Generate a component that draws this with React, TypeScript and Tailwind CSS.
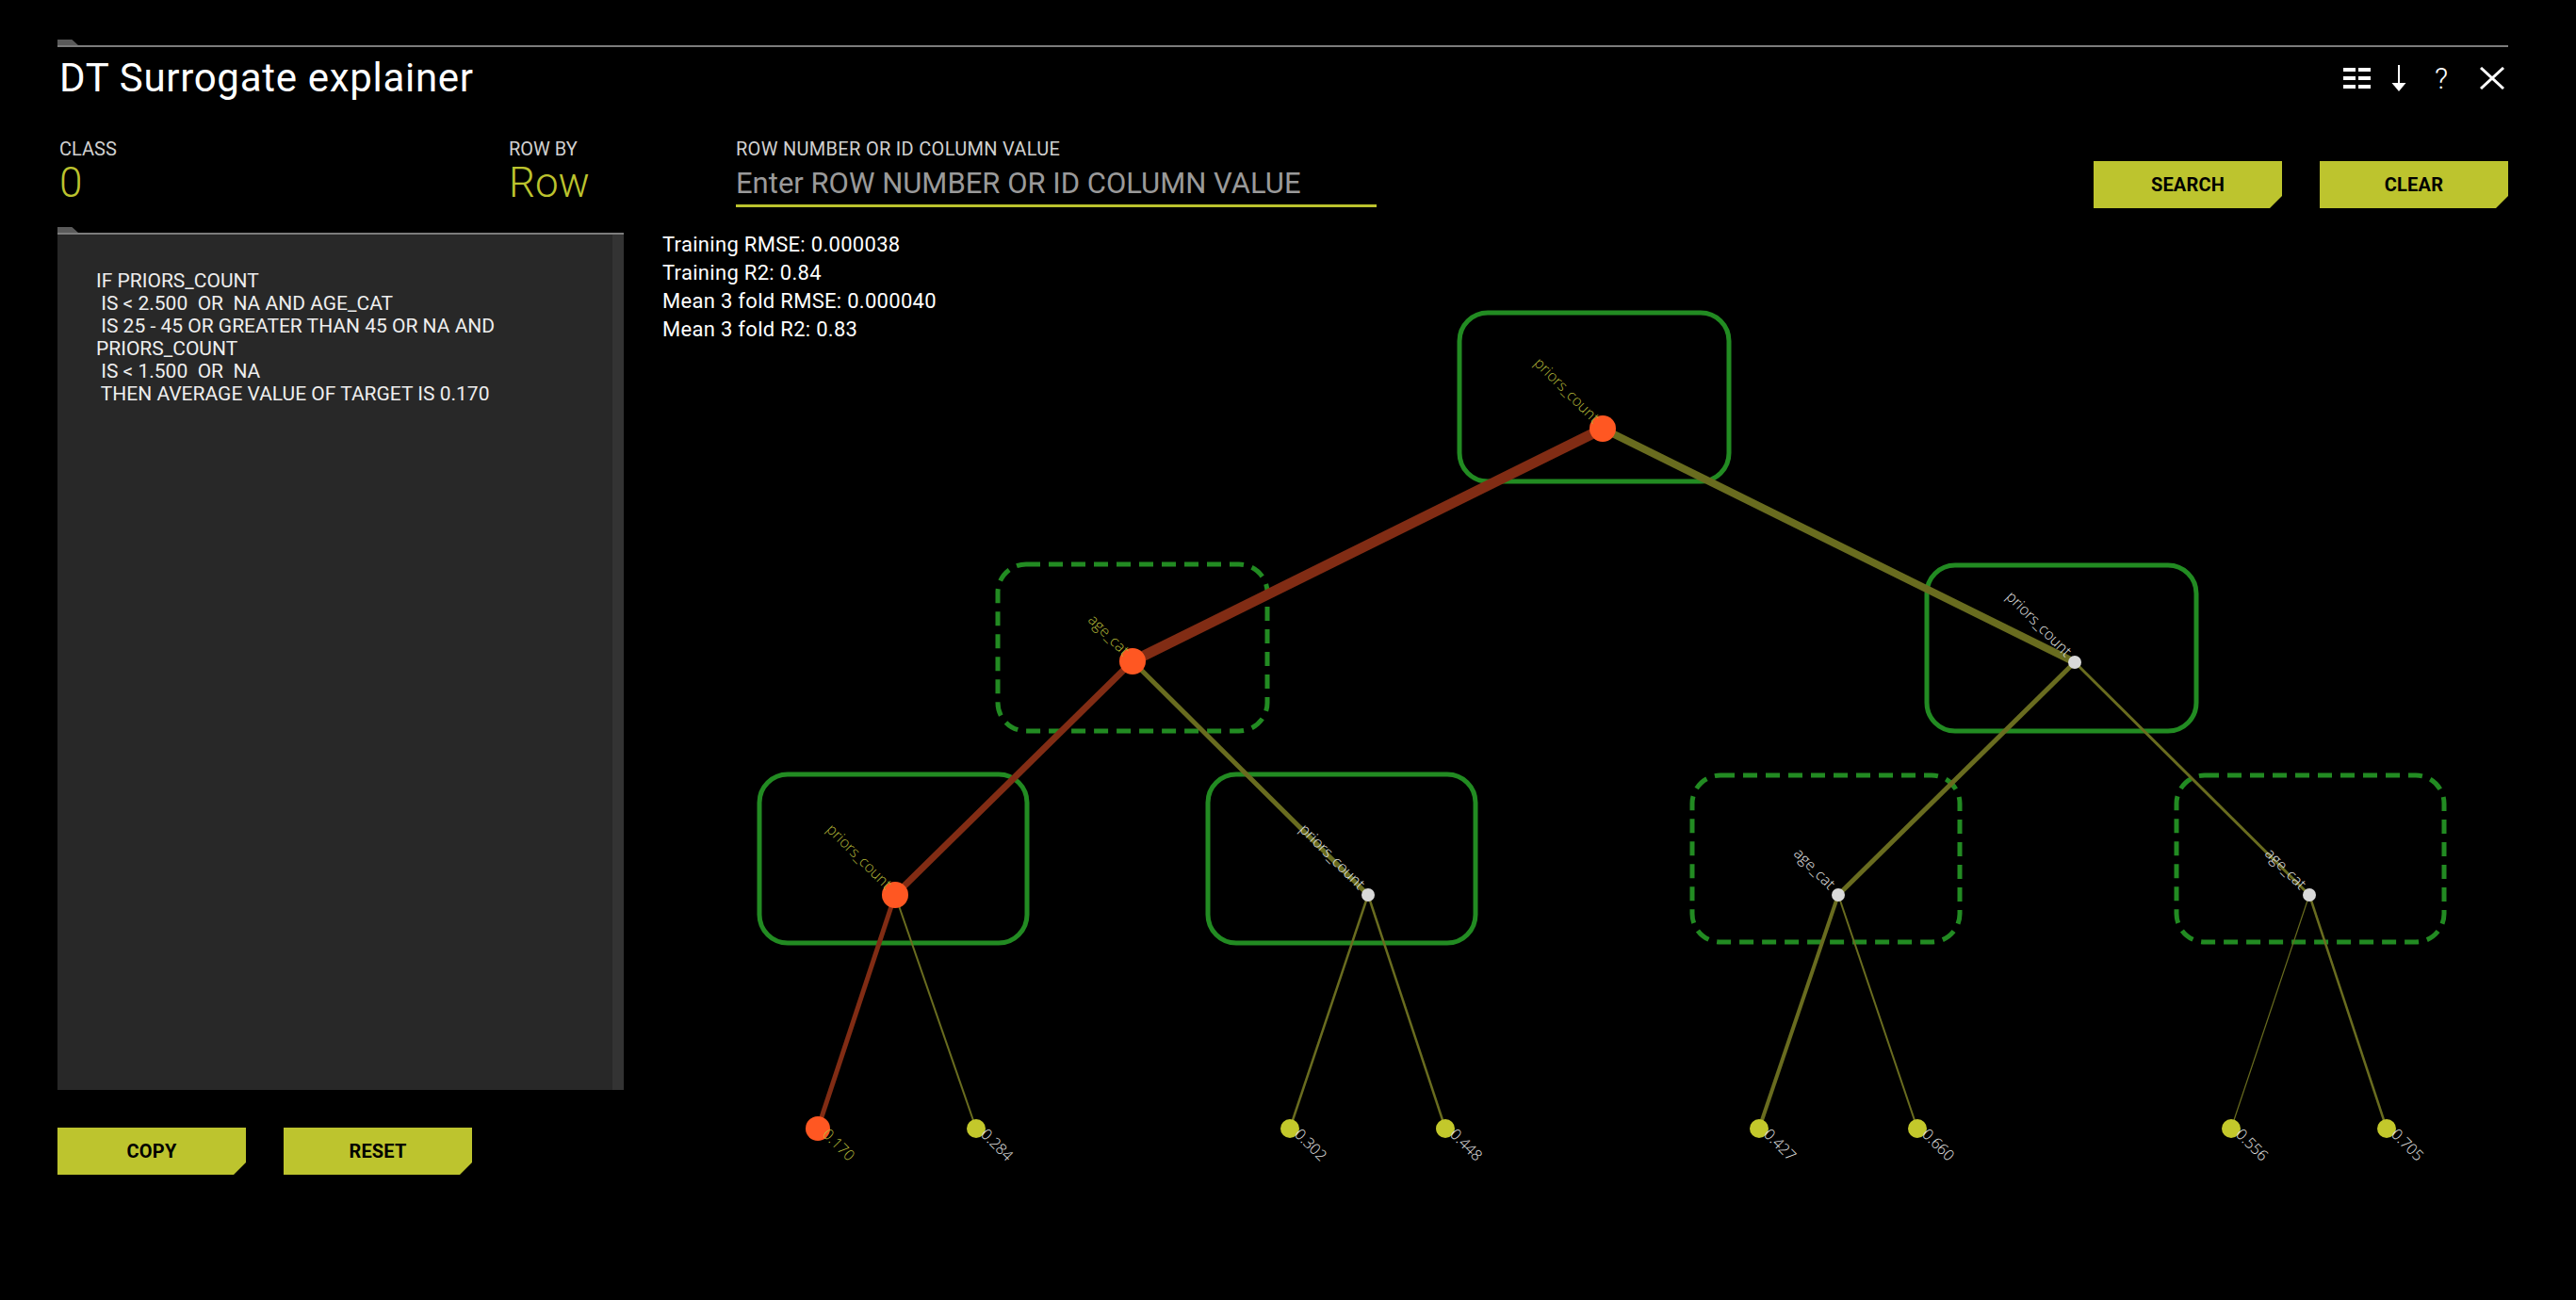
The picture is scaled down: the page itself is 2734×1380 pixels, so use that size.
import React from "react";

type TreeNode = {
  x: number;
  y: number;
  box: [number, number, number, number];
  dashed: boolean;
  label: string;
  onPath: boolean;
};

type Leaf = { x: number; y: number; value: string; onPath: boolean };

type Edge = { from: [number, number]; to: [number, number]; w: number; onPath: boolean };

// coordinates are page pixels; the svg viewBox is offset to match
const nodes: TreeNode[] = [
  { x: 1701, y: 456, box: [1549, 333, 1835, 512], dashed: false, label: "priors_count", onPath: true },
  { x: 1202, y: 703, box: [1059, 600, 1345, 777], dashed: true, label: "age_cat", onPath: true },
  { x: 2202, y: 704, box: [2045, 601, 2331, 777], dashed: false, label: "priors_count", onPath: false },
  { x: 950, y: 951, box: [806, 823, 1090, 1002], dashed: false, label: "priors_count", onPath: true },
  { x: 1452, y: 951, box: [1282, 823, 1566, 1002], dashed: false, label: "priors_count", onPath: false },
  { x: 1951, y: 951, box: [1796, 824, 2080, 1001], dashed: true, label: "age_cat", onPath: false },
  { x: 2451, y: 951, box: [2310, 824, 2594, 1001], dashed: true, label: "age_cat", onPath: false },
];

const leaves: Leaf[] = [
  { x: 868, y: 1199, value: "0.170", onPath: true },
  { x: 1036, y: 1199, value: "0.284", onPath: false },
  { x: 1369, y: 1199, value: "0.302", onPath: false },
  { x: 1534, y: 1199, value: "0.448", onPath: false },
  { x: 1867, y: 1199, value: "0.427", onPath: false },
  { x: 2035, y: 1199, value: "0.660", onPath: false },
  { x: 2368, y: 1199, value: "0.556", onPath: false },
  { x: 2533, y: 1199, value: "0.705", onPath: false },
];

const p = (i: number): [number, number] => [nodes[i].x, nodes[i].y];
const l = (i: number): [number, number] => [leaves[i].x, leaves[i].y];

const edges: Edge[] = [
  { from: p(0), to: p(1), w: 11, onPath: true },
  { from: p(0), to: p(2), w: 8, onPath: false },
  { from: p(1), to: p(3), w: 7, onPath: true },
  { from: p(1), to: p(4), w: 5, onPath: false },
  { from: p(2), to: p(5), w: 5, onPath: false },
  { from: p(2), to: p(6), w: 3, onPath: false },
  { from: p(3), to: l(0), w: 5, onPath: true },
  { from: p(3), to: l(1), w: 2, onPath: false },
  { from: p(4), to: l(2), w: 2.5, onPath: false },
  { from: p(4), to: l(3), w: 2.5, onPath: false },
  { from: p(5), to: l(4), w: 4, onPath: false },
  { from: p(5), to: l(5), w: 2, onPath: false },
  { from: p(6), to: l(6), w: 1.2, onPath: false },
  { from: p(6), to: l(7), w: 2.5, onPath: false },
];

const ruleLines = [
  "IF PRIORS_COUNT",
  " IS < 2.500  OR  NA AND AGE_CAT",
  " IS 25 - 45 OR GREATER THAN 45 OR NA AND",
  "PRIORS_COUNT",
  " IS < 1.500  OR  NA",
  " THEN AVERAGE VALUE OF TARGET IS 0.170",
];

const stats = [
  "Training RMSE: 0.000038",
  "Training R2: 0.84",
  "Mean 3 fold RMSE: 0.000040",
  "Mean 3 fold R2: 0.83",
];

function Tab() {
  return <div className="h-[6px] w-[22px] bg-[#5a5a5a] [clip-path:polygon(0_0,70%_0,100%_100%,0_100%)]" />;
}

function CutButton({ children }: { children: React.ReactNode }) {
  return (
    <button className="flex h-[50px] w-[200px] items-center justify-center bg-[#bdc42e] text-[20px] font-bold tracking-[0.2px] text-black [clip-path:polygon(0_0,100%_0,100%_calc(100%-13px),calc(100%-13px)_100%,0_100%)]">
      {children}
    </button>
  );
}

function TreeChart() {
  return (
    <svg width={1959} height={1030} viewBox="703 242 1959 1030" className="block">
      {nodes.map((n, i) => (
        <rect
          key={`b${i}`}
          x={n.box[0]}
          y={n.box[1]}
          width={n.box[2] - n.box[0]}
          height={n.box[3] - n.box[1]}
          rx={30}
          fill="none"
          stroke="#228b22"
          strokeWidth={5}
          strokeDasharray={n.dashed ? "15 9" : undefined}
        />
      ))}
      {edges.map((e, i) => (
        <line
          key={`e${i}`}
          x1={e.from[0]}
          y1={e.from[1]}
          x2={e.to[0]}
          y2={e.to[1]}
          stroke={e.onPath ? "#812c14" : "#696c1f"}
          strokeWidth={e.w}
        />
      ))}
      {nodes.map((n, i) => (
        <circle key={`n${i}`} cx={n.x} cy={n.y} r={n.onPath ? 14 : 7} fill={n.onPath ? "#ff5722" : "#d9d9d9"} />
      ))}
      {leaves.map((f, i) => (
        <circle key={`l${i}`} cx={f.x} cy={f.y} r={f.onPath ? 13 : 10} fill={f.onPath ? "#ff5722" : "#c3c82b"} />
      ))}
      <g fontFamily="'Open Sans', 'DejaVu Sans', sans-serif" fontSize={16} fontWeight={300}>
        {nodes.map((n, i) => (
          <text
            key={`t${i}`}
            transform={`translate(${n.x - 10} ${n.y - 5}) rotate(45)`}
            textAnchor="end"
            fill={n.onPath ? "#b4b83a" : "#e6e6e6"}
          >
            {n.label}
          </text>
        ))}
        {leaves.map((f, i) => (
          <text
            key={`v${i}`}
            transform={`translate(${f.x + 4} ${f.y + 7}) rotate(45)`}
            fill={f.onPath ? "#b4b83a" : "#e6e6e6"}
          >
            {f.value}
          </text>
        ))}
      </g>
    </svg>
  );
}

export default function App() {
  return (
    <div className="h-[1380px] w-full overflow-hidden bg-black pl-[61px] pr-[72px] pt-[42px] font-['Roboto','Liberation_Sans',sans-serif] text-white">
      {/* header rule */}
      <Tab />
      <div className="h-[2px] bg-[#7c7c7c]" />

      {/* title + tools */}
      <div className="mt-[12px] flex h-[42px] items-center justify-between">
        <h1 className="pl-[2px] text-[42px] leading-none font-normal tracking-[0.7px]">DT Surrogate explainer</h1>
        <div className="flex items-center pr-[4px]">
          <svg width="30" height="22" viewBox="0 0 30 22" fill="#fff">
            <rect x="0" y="0" width="13" height="4" />
            <rect x="16" y="0" width="13" height="4" />
            <rect x="0" y="9" width="13" height="4" />
            <rect x="16" y="9" width="13" height="4" />
            <rect x="0" y="18" width="13" height="4" />
            <rect x="16" y="18" width="13" height="4" />
          </svg>
          <svg width="16" height="28" viewBox="0 0 16 28" fill="#fff" className="ml-[21px]">
            <rect x="7" y="0" width="2" height="21" />
            <path d="M0.5 19 L15.5 19 L8 28 Z" />
          </svg>
          <span className="ml-[30px] w-[13px] text-center text-[31px] leading-none font-light">?</span>
          <svg width="26" height="24" viewBox="0 0 26 24" stroke="#fff" strokeWidth="3" className="ml-[35px]">
            <line x1="1" y1="1" x2="25" y2="23" />
            <line x1="25" y1="1" x2="1" y2="23" />
          </svg>
        </div>
      </div>

      {/* controls */}
      <div className="mt-[44px] flex items-start">
        <div className="w-[479px] pl-[2px]">
          <div className="text-[20px] leading-[20px] text-[#d0d0d0]">CLASS</div>
          <div className="mt-[3px] h-[46px] text-[44px] leading-[46px] font-light text-[#bcc32e]">0</div>
        </div>
        <div className="w-[241px]">
          <div className="text-[20px] leading-[20px] text-[#d0d0d0]">ROW BY</div>
          <div className="mt-[3px] h-[46px] text-[44px] leading-[46px] font-light text-[#bcc32e]">Row</div>
        </div>
        <div className="w-[680px]">
          <div className="text-[20px] leading-[20px] tracking-[0.3px] text-[#d0d0d0]">ROW NUMBER OR ID COLUMN VALUE</div>
          <input
            className="mt-[3px] h-[49px] w-full border-b-[3px] border-[#bcc32e] bg-transparent text-[31px] text-white outline-none placeholder:text-[#9a9a9a]"
            placeholder="Enter ROW NUMBER OR ID COLUMN VALUE"
          />
        </div>
        <div className="ml-auto mt-[23px] flex gap-[40px]">
          <CutButton>SEARCH</CutButton>
          <CutButton>CLEAR</CutButton>
        </div>
      </div>

      {/* body */}
      <div className="mt-[20px] flex gap-[41px]">
        <div className="w-[601px]">
          <Tab />
          <div className="flex h-[910px] border-t-2 border-[#7c7c7c] bg-[#282828]">
            <div className="flex-1 whitespace-pre pl-[41px] pt-[37px] text-[21px] leading-[24px] text-[#eeeeee]">
              {ruleLines.join("\n")}
            </div>
            <div className="w-[12px] bg-[#333333]" />
          </div>
          <div className="mt-[40px] flex gap-[40px]">
            <CutButton>COPY</CutButton>
            <CutButton>RESET</CutButton>
          </div>
        </div>

        <div className="relative flex-1">
          <TreeChart />
          <div className="absolute left-0 top-[4px] text-[22px] leading-[30px] tracking-[0.3px] text-white">
            {stats.map((s) => (
              <div key={s}>{s}</div>
            ))}
          </div>
        </div>
      </div>
    </div>
  );
}
